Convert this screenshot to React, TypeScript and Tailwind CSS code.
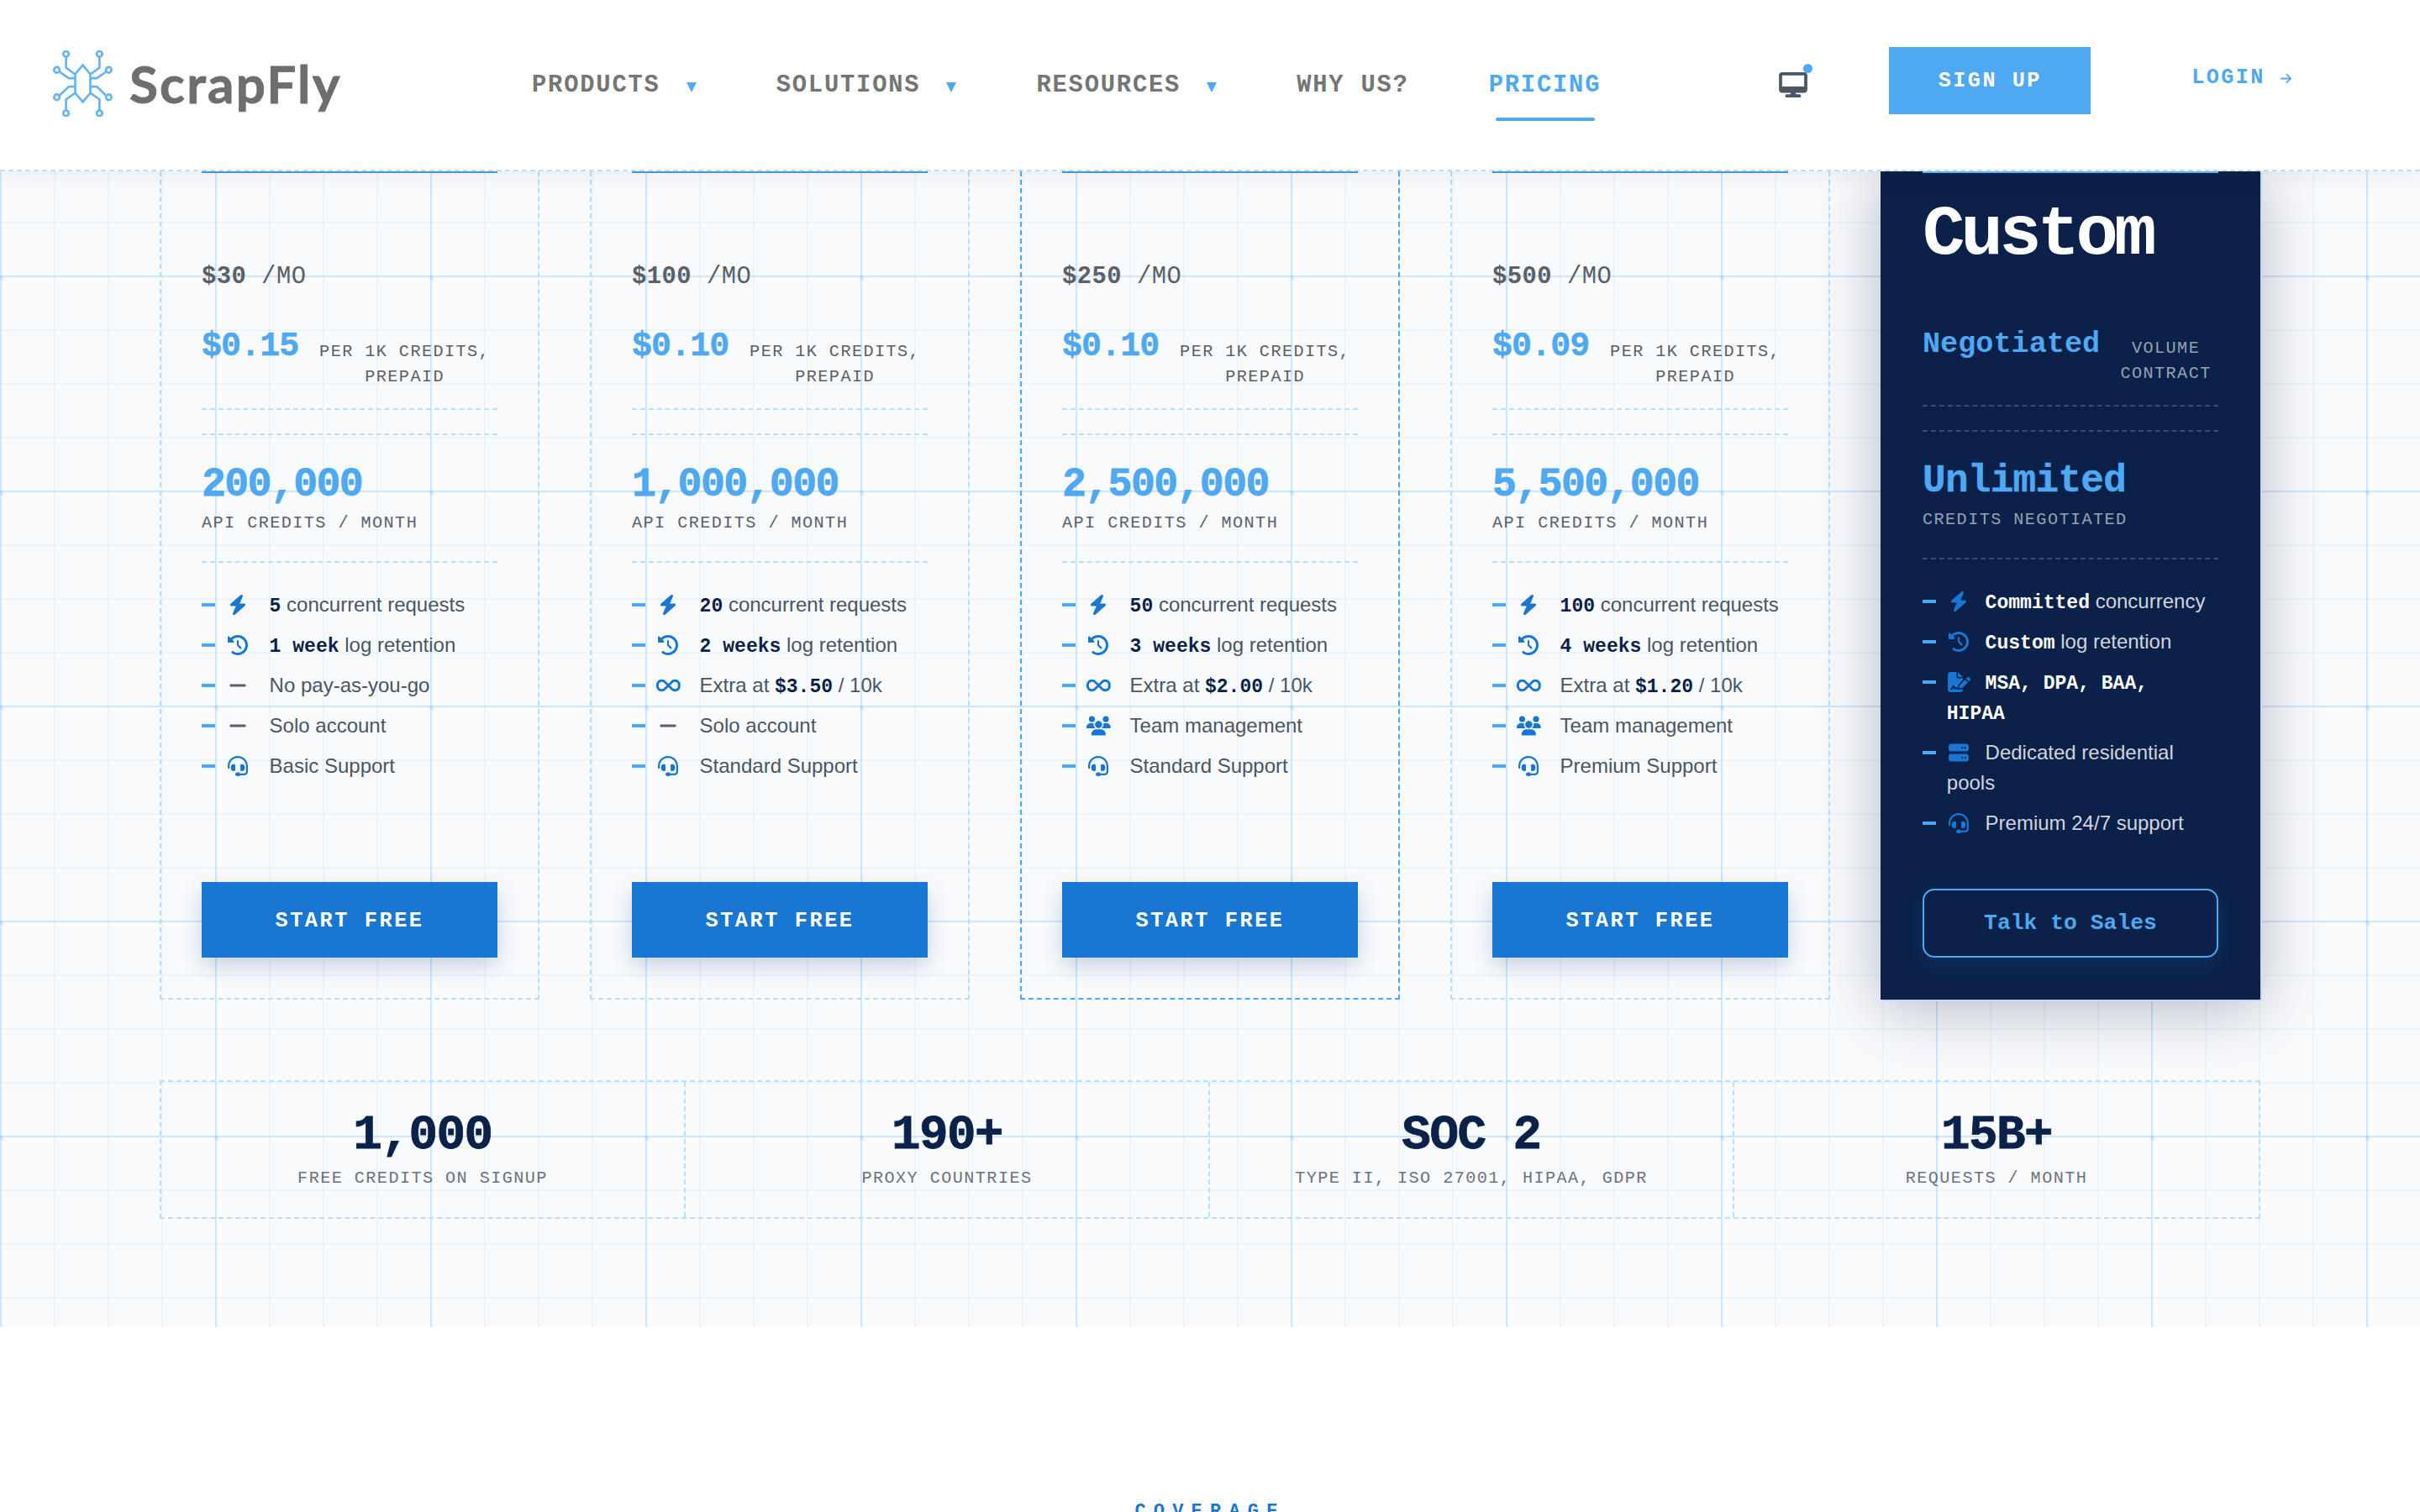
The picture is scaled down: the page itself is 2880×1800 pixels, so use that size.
import React from "react";
import {
  FaArrowRight,
  FaBolt,
  FaClockRotateLeft,
  FaDesktop,
  FaFileSignature,
  FaHeadset,
  FaInfinity,
  FaMinus,
  FaServer,
  FaUsers,
} from "react-icons/fa6";

type Feature = { icon: React.ReactNode; text: React.ReactNode };

const Mono = ({ children, dark }: { children: React.ReactNode; dark?: boolean }) => (
  <span className={`font-['Liberation_Mono',monospace] text-[23.04px] font-bold leading-none ${dark ? "text-white" : "text-[#0b2149]"}`}>{children}</span>
);

const bolt = <FaBolt size={24} />;
const history = <FaClockRotateLeft size={24} />;
const infinity = <FaInfinity className="h-[24px] w-[30px]" />;
const minus = <FaMinus size={24} className="text-[#5b6069]" />;
const users = <FaUsers className="h-[24px] w-[30px]" />;
const headset = <FaHeadset size={24} />;

const plans = [
  {
    price: "$30",
    rate: "$0.15",
    credits: "200,000",
    features: [
      { icon: bolt, text: <><Mono>5</Mono> concurrent requests</> },
      { icon: history, text: <><Mono>1 week</Mono> log retention</> },
      { icon: minus, text: "No pay-as-you-go" },
      { icon: minus, text: "Solo account" },
      { icon: headset, text: "Basic Support" },
    ] as Feature[],
  },
  {
    price: "$100",
    rate: "$0.10",
    credits: "1,000,000",
    features: [
      { icon: bolt, text: <><Mono>20</Mono> concurrent requests</> },
      { icon: history, text: <><Mono>2 weeks</Mono> log retention</> },
      { icon: infinity, text: <>Extra at <Mono>$3.50</Mono> / 10k</> },
      { icon: minus, text: "Solo account" },
      { icon: headset, text: "Standard Support" },
    ] as Feature[],
  },
  {
    price: "$250",
    rate: "$0.10",
    credits: "2,500,000",
    highlight: true,
    features: [
      { icon: bolt, text: <><Mono>50</Mono> concurrent requests</> },
      { icon: history, text: <><Mono>3 weeks</Mono> log retention</> },
      { icon: infinity, text: <>Extra at <Mono>$2.00</Mono> / 10k</> },
      { icon: users, text: "Team management" },
      { icon: headset, text: "Standard Support" },
    ] as Feature[],
  },
  {
    price: "$500",
    rate: "$0.09",
    credits: "5,500,000",
    features: [
      { icon: bolt, text: <><Mono>100</Mono> concurrent requests</> },
      { icon: history, text: <><Mono>4 weeks</Mono> log retention</> },
      { icon: infinity, text: <>Extra at <Mono>$1.20</Mono> / 10k</> },
      { icon: users, text: "Team management" },
      { icon: headset, text: "Premium Support" },
    ] as Feature[],
  },
];

const customFeatures: Feature[] = [
  { icon: bolt, text: <><Mono dark>Committed</Mono> concurrency</> },
  { icon: history, text: <><Mono dark>Custom</Mono> log retention</> },
  { icon: <FaFileSignature className="h-[24px] w-[27px]" />, text: <Mono dark>MSA, DPA, BAA,<br />HIPAA</Mono> },
  { icon: <FaServer size={24} />, text: "Dedicated residential pools" },
  { icon: headset, text: "Premium 24/7 support" },
];

const stats = [
  { value: "1,000", label: "FREE CREDITS ON SIGNUP" },
  { value: "190+", label: "PROXY COUNTRIES" },
  { value: "SOC 2", label: "TYPE II, ISO 27001, HIPAA, GDPR" },
  { value: "15B+", label: "REQUESTS / MONTH" },
];

const Logo = () => (
  <div className="flex w-[633px] items-start pl-[63px] pt-[60px]">
    <svg width="71" height="79" viewBox="68 60 214 238" fill="none" stroke="#64b5f6" strokeWidth="8" className="shrink-0">
      <path d="M175 113 L202 145 V213 L175 245 L148 213 V145 Z" />
      <path d="M115 85 V122 L148 146" />
      <path d="M235 85 V122 L202 146" />
      <path d="M92 137 L125 160 H148" />
      <path d="M258 137 L225 160 H202" />
      <path d="M92 221 L125 190 H148" />
      <path d="M258 221 L225 190 H202" />
      <path d="M115 273 V236 L148 212" />
      <path d="M235 273 V236 L202 212" />
      <circle cx="115" cy="73" r="10" />
      <circle cx="235" cy="73" r="10" />
      <circle cx="82" cy="130" r="10" />
      <circle cx="268" cy="130" r="10" />
      <circle cx="82" cy="228" r="10" />
      <circle cx="268" cy="228" r="10" />
      <circle cx="115" cy="285" r="10" />
      <circle cx="235" cy="285" r="10" />
    </svg>
    <span className="ml-[20px] mt-[-5px] font-['Lato',sans-serif] text-[62px] font-bold leading-[88px] tracking-[2.2px] text-[#6d6e71] [-webkit-text-stroke:0.8px]">
      ScrapFly
    </span>
  </div>
);

const NavItem = ({ label, menu, active }: { label: string; menu?: boolean; active?: boolean }) => (
  <div className={`relative flex items-start text-[28.8px] font-bold leading-[36px] tracking-[1.8px] ${active ? "text-[#4ea8f2]" : "text-[#757575]"}`}>
    {label}
    {menu && (
      <svg width="12" height="12" viewBox="0 0 12 12" className="ml-[31px] mt-[14px]">
        <polygon points="0,0 12,0 6,12" fill="#4ea8f2" />
      </svg>
    )}
    {active && <span className="absolute left-[8px] top-[56px] h-[4px] w-[118px] rounded-full bg-[#4ea8f2]" />}
  </div>
);

const Header = () => (
  <header className="relative z-20 flex h-[204px] items-start border-b-2 border-dashed border-[#bbdefb] bg-white font-['Liberation_Mono',monospace] shadow-[0_4px_24px_rgba(20,30,50,0.07)]">
    <Logo />
    <nav className="flex gap-[95px] pt-[84px]">
      <NavItem label="PRODUCTS" menu />
      <NavItem label="SOLUTIONS" menu />
      <NavItem label="RESOURCES" menu />
      <NavItem label="WHY US?" />
      <NavItem label="PRICING" active />
    </nav>
    <div className="relative ml-[212px] mt-[86px] text-[#4b5563]">
      <FaDesktop size={30} className="w-[34px]" />
      <span className="absolute left-[29px] top-[-10px] h-[11px] w-[11px] rounded-full bg-[#4ea8f2]" />
    </div>
    <div className="ml-[97px] mt-[56px] flex h-[80px] w-[240px] items-center justify-center bg-[#4ea8f2] pt-[2px] text-[25.2px] font-bold tracking-[2.5px] text-white">
      SIGN UP
    </div>
    <div className="ml-[120px] mt-[77px] flex items-center text-[25.2px] font-bold leading-[32px] tracking-[2.4px] text-[#4ea8f2]">
      LOGIN
      <FaArrowRight size={15} className="ml-[17px]" />
    </div>
  </header>
);

const FeatureList = ({ items, dark }: { items: Feature[]; dark?: boolean }) => (
  <ul className={`mt-[32px] flex flex-col gap-[12px] text-[24px] leading-[36px] ${dark ? "text-[#d1d5db]" : "text-[#4b5563]"}`}>
    {items.map((item, i) => (
      <li key={i} className="relative pl-[28.8px]">
        <span className="absolute left-0 top-[16px] h-[4px] w-[16px] bg-[#4ea8f2]" />
        <span className={`mt-[10px] inline-flex h-[16px] w-[28.8px] items-center justify-center align-top text-[#1976d2] ${dark ? "mr-[17px]" : "mr-[23px]"}`}>
          {item.icon}
        </span>
        {item.text}
      </li>
    ))}
  </ul>
);

const PlanCard = ({ plan }: { plan: (typeof plans)[number] }) => (
  <div className={`flex flex-col border-2 border-t-0 border-dashed px-[48px] pb-[48px] ${plan.highlight ? "border-[#4ea8f2]" : "border-[#bbdefb]"}`}>
    <div className="border-t-2 border-[#4a9de6] font-['Liberation_Mono',monospace]">
      <div className="mt-[106px] text-[28.8px] leading-[36px] tracking-[0.5px] text-[#5b6069]">
        <span className="font-bold">{plan.price}</span> /MO
      </div>
      <div className="mt-[41px] flex items-start">
        <span className="text-[40px] font-bold leading-[48px] tracking-[-0.96px] text-[#4ea8f2] [-webkit-text-stroke:0.5px]">{plan.rate}</span>
        <span className="ml-[16px] flex-1 pt-[15px] text-center text-[20.16px] leading-[30px] tracking-[1.44px] text-[#5b6069]">
          PER 1K CREDITS, PREPAID
        </span>
      </div>
      <div className="mt-[22px] border-t-2 border-dashed border-[#bbdefb]" />
      <div className="mt-[28px] border-t-2 border-dashed border-[#bbdefb]" />
      <div className="mt-[31px] text-[48px] font-bold leading-[56px] tracking-[-1.5px] text-[#4ea8f2] [-webkit-text-stroke:0.8px]">{plan.credits}</div>
      <div className="mt-[3px] text-[20.16px] leading-[30px] tracking-[1.44px] text-[#5b6069]">API CREDITS / MONTH</div>
      <div className="mt-[30px] border-t-2 border-dashed border-[#bbdefb]" />
    </div>
    <FeatureList items={plan.features} />
    <button className="mt-auto h-[90px] w-full bg-[#1976d2] pt-[3px] font-['Liberation_Mono',monospace] text-[25.2px] font-bold tracking-[2.6px] text-white shadow-[0_10px_24px_rgba(25,70,130,0.22)]">
      START FREE
    </button>
  </div>
);

const CustomCard = () => (
  <div className="flex flex-col bg-[#0b2149] px-[50px] pb-[50px] shadow-[2px_2px_0_#c9d8ea,0_10px_70px_rgba(15,35,75,0.3)]">
    <div className="border-t-2 border-[#64b5f6] font-['Liberation_Mono',monospace]">
      <div className="mt-[29px] text-[84px] font-bold leading-[90px] tracking-[-4.8px] text-white">Custom</div>
      <div className="mt-[63px] flex items-start">
        <span className="text-[35.2px] font-bold leading-[44px] text-[#4ea8f2]">Negotiated</span>
        <span className="ml-[16px] flex-1 pt-[12px] text-center text-[20.16px] leading-[30px] tracking-[1.44px] text-[#98a2b3]">
          VOLUME CONTRACT
        </span>
      </div>
      <div className="mt-[22px] border-t-2 border-dashed border-white/20" />
      <div className="mt-[28px] border-t-2 border-dashed border-white/20" />
      <div className="mt-[31px] text-[46px] font-bold leading-[56px] tracking-[-0.7px] text-[#4ea8f2] [-webkit-text-stroke:0.5px]">Unlimited</div>
      <div className="mt-[3px] text-[20.16px] leading-[30px] tracking-[1.44px] text-[#98a2b3]">CREDITS NEGOTIATED</div>
      <div className="mt-[30px] border-t-2 border-dashed border-white/20" />
    </div>
    <FeatureList items={customFeatures} dark />
    <button className="mt-auto h-[82px] w-full rounded-[14px] border-2 border-[#4ea8f2] pt-[2px] font-['Liberation_Mono',monospace] text-[26.4px] font-bold text-[#4ea8f2] shadow-[0_8px_24px_rgba(78,168,242,0.12)]">
      Talk to Sales
    </button>
  </div>
);

const StatsRow = () => (
  <div className="mt-[96px] grid h-[165px] grid-cols-4 border-2 border-dashed border-[#bbdefb] text-center font-['Liberation_Mono',monospace]">
    {stats.map((s, i) => (
      <div key={s.value} className={`pt-[28px] ${i < 3 ? "border-r-2 border-dashed border-[#bbdefb]" : ""}`}>
        <div className="text-[57.6px] font-bold leading-[72px] tracking-[-1.5px] text-[#0b2149] [-webkit-text-stroke:0.8px]">{s.value}</div>
        <div className="text-[20.16px] leading-[30px] tracking-[1.44px] text-[#6b7280]">{s.label}</div>
      </div>
    ))}
  </div>
);

export default function App() {
  return (
    <div className="h-[1800px] w-[2880px] overflow-hidden bg-white font-['Liberation_Sans',Arial,sans-serif]">
      <Header />
      <section className="h-[1376px] bg-[#f9fafc] bg-[radial-gradient(circle,rgba(100,181,246,0.18)_3px,transparent_3px),linear-gradient(to_right,rgba(100,181,246,0.22)_2px,transparent_2px),linear-gradient(to_bottom,rgba(100,181,246,0.22)_2px,transparent_2px),linear-gradient(to_right,rgba(100,181,246,0.08)_2px,transparent_2px),linear-gradient(to_bottom,rgba(100,181,246,0.08)_2px,transparent_2px)] [background-position:130px_-1px,0_124px,0_124px,0_60px,0_60px] [background-size:256px_256px,256px_256px,256px_256px,64px_64px,64px_64px]">
        <div className="mx-auto w-[2500px]">
          <div className="grid h-[986px] grid-cols-5 gap-[60px]">
            {plans.map((plan) => (
              <PlanCard key={plan.price} plan={plan} />
            ))}
            <CustomCard />
          </div>
          <StatsRow />
        </div>
      </section>
      <div className="pt-[206px] text-center font-['Liberation_Mono',monospace] text-[22px] font-bold leading-[28px] tracking-[9.2px] text-[#1976d2]">
        COVERAGE
      </div>
    </div>
  );
}
